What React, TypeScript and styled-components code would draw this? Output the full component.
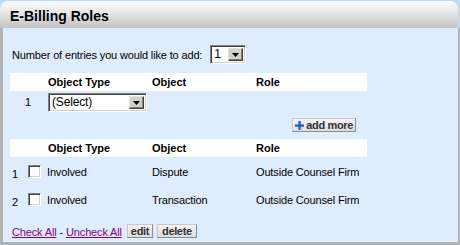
import React from "react";
import styled, { createGlobalStyle } from "styled-components";

const GlobalStyle = createGlobalStyle`
  html, body {
    margin: 0;
    padding: 0;
    background: #bcdcf6;
  }
  body {
    font-family: "Liberation Sans", Arial, sans-serif;
    font-size: 11px;
    letter-spacing: -0.15px;
    color: #000;
  }
`;

type Entry = { id: number; type: string; object: string; role: string };

const entries: Entry[] = [
  { id: 1, type: "Involved", object: "Dispute", role: "Outside Counsel Firm" },
  { id: 2, type: "Involved", object: "Transaction", role: "Outside Counsel Firm" },
];

function PlusIcon() {
  return (
    <svg width="9" height="9" viewBox="0 0 9 9">
      <rect x="3.4" y="0" width="2.3" height="9" fill="#1463cc" />
      <rect x="0" y="3.4" width="9" height="2.3" fill="#1463cc" />
    </svg>
  );
}

function FakeSelect(props: { value: string; width: number }) {
  return (
    <SelectBox style={{ width: props.width }}>
      <SelectValue>{props.value}</SelectValue>
      <SelectArrow>
        <svg width="7" height="4" viewBox="0 0 7 4">
          <polygon points="0,0 7,0 3.5,4" fill="#000" />
        </svg>
      </SelectArrow>
    </SelectBox>
  );
}

export default function App() {
  return (
    <Page>
      <GlobalStyle />
      <Panel>
        <Header>E-Billing Roles</Header>
        <Body>
          <EntriesRow>
            <span>Number of entries you would like to add:</span>
            <FakeSelect value="1" width={36} />
          </EntriesRow>

          <AddTable>
            <HeadRow $cols="38px 104px 104px 111px">
              <span />
              <HeadCell>Object Type</HeadCell>
              <HeadCell>Object</HeadCell>
              <HeadCell>Role</HeadCell>
            </HeadRow>
            <AddRow>
              <RowNum>1</RowNum>
              <FakeSelect value="(Select)" width={99} />
            </AddRow>
          </AddTable>

          <AddMoreBar>
            <SmallButton $pad={2} $gap={2}>
              <PlusIcon />
              add more
            </SmallButton>
          </AddMoreBar>

          <ListTable>
            <HeadRow $cols="16px 22px 104px 104px 111px">
              <span />
              <span />
              <HeadCell>Object Type</HeadCell>
              <HeadCell>Object</HeadCell>
              <HeadCell>Role</HeadCell>
            </HeadRow>
            {entries.map((e) => (
              <ListRow key={e.id}>
                <ListNum>{e.id}</ListNum>
                <CheckCell>
                  <Checkbox />
                </CheckCell>
                <Cell $shift={-1}>{e.type}</Cell>
                <Cell>{e.object}</Cell>
                <Cell>{e.role}</Cell>
              </ListRow>
            ))}
          </ListTable>

          <Footer>
            <LinkText>Check All</LinkText>
            <Dash>-</Dash>
            <LinkText>Uncheck All</LinkText>
            <FooterButtons>
              <SmallButton $pad={3}>edit</SmallButton>
              <SmallButton $pad={4}>delete</SmallButton>
            </FooterButtons>
          </Footer>
        </Body>
      </Panel>
    </Page>
  );
}

const Page = styled.div`
  width: 460px;
  height: 245px;
  padding-top: 1px;
  box-sizing: border-box;
  overflow: hidden;
`;

const Panel = styled.div`
  display: flex;
  flex-direction: column;
  height: 244px;
`;

const Header = styled.div`
  height: 27px;
  margin-right: 2px;
  padding: 2px 0 0 10px;
  box-sizing: border-box;
  display: flex;
  align-items: center;
  border-radius: 8px 8px 0 0;
  background: linear-gradient(#fbfbfb, #e6e6e6 45%, #c2c2c2);
  font-size: 14px;
  font-weight: bold;
  letter-spacing: 0;
  color: #000;
`;

const Body = styled.div`
  flex: 1;
  background: #deedfe;
  border-left: 3px solid #b2b2b2;
  border-right: 2px solid #b2b2b2;
  border-bottom: 3px solid #b2b2b2;
  padding: 17px 0 0 7px;
  display: flex;
  flex-direction: column;
`;

const EntriesRow = styled.div`
  display: flex;
  align-items: center;
  gap: 8px;
  padding-left: 2px;
  height: 19px;
`;

const SelectBox = styled.div`
  height: 19px;
  box-sizing: border-box;
  display: flex;
  background: #fff;
  border: 1px solid;
  border-color: #808080 #ffffff #ffffff #808080;
  box-shadow: inset 1px 1px 0 #404040, inset -1px -1px 0 #d4d0c8;
  padding: 2px;
`;

const SelectValue = styled.div`
  flex: 1;
  display: flex;
  align-items: center;
  padding-left: 1px;
  font-size: 12px;
  line-height: 13px;
`;

const SelectArrow = styled.div`
  width: 15px;
  box-sizing: border-box;
  background: #d4d0c8;
  display: flex;
  align-items: center;
  justify-content: center;
  border: 1px solid;
  border-color: #e4e2dc #404040 #404040 #e4e2dc;
  box-shadow: inset -1px -1px 0 #808080;
`;

const AddTable = styled.div`
  margin-top: 9px;
  width: 357px;
`;

const HeadRow = styled.div<{ $cols: string }>`
  display: grid;
  grid-template-columns: ${(p) => p.$cols};
  height: 18px;
  align-items: center;
  background: #fff;
`;

const HeadCell = styled.span`
  font-weight: bold;
  letter-spacing: 0;
`;

const AddRow = styled.div`
  display: grid;
  grid-template-columns: 38px 1fr;
  align-items: center;
  height: 22px;
  padding-top: 1px;
  box-sizing: border-box;
`;

const RowNum = styled.span`
  padding-left: 15px;
  margin-top: -2px;
`;

const AddMoreBar = styled.div`
  width: 346px;
  margin-top: 5px;
  display: flex;
  justify-content: flex-end;
`;

const SmallButton = styled.button<{ $pad?: number; $gap?: number }>`
  height: 14px;
  padding: 0 ${(p) => p.$pad ?? 2}px;
  display: inline-flex;
  align-items: center;
  gap: ${(p) => p.$gap ?? 0}px;
  font-family: "Liberation Sans", Arial, sans-serif;
  font-size: 11px;
  font-weight: bold;
  letter-spacing: -0.35px;
  color: #333;
  background: linear-gradient(#f4f4f4, #dcdcdc);
  border: 1px solid;
  border-color: #c8c8c8 #8c8c8c #8c8c8c #c8c8c8;
  border-radius: 0;
  line-height: 12px;
  cursor: pointer;
`;

const ListTable = styled.div`
  margin-top: 7px;
  width: 357px;
`;

const ListRow = styled.div`
  display: grid;
  grid-template-columns: 16px 22px 104px 104px 111px;
  align-items: center;
  height: 28px;
  padding-top: 1px;
  box-sizing: border-box;
`;

const ListNum = styled.span`
  padding-left: 2px;
  padding-top: 4px;
`;

const CheckCell = styled.span`
  display: flex;
  padding-left: 2px;
`;

const Checkbox = styled.span`
  width: 13px;
  height: 13px;
  box-sizing: border-box;
  background: #fff;
  border: 1px solid;
  border-color: #808080 #ffffff #ffffff #808080;
  box-shadow: inset 1px 1px 0 #404040, inset -1px -1px 0 #d4d0c8;
`;

const Cell = styled.span<{ $shift?: number }>`
  margin-left: ${(p) => p.$shift || 0}px;
`;

const Footer = styled.div`
  margin-top: 11px;
  padding-left: 2px;
  display: flex;
  align-items: center;
  height: 14px;
`;

const LinkText = styled.a`
  color: #800080;
  text-decoration: underline;
  cursor: pointer;
  margin-top: 2px;
`;

const Dash = styled.span`
  margin: 2px 3px 0;
`;

const FooterButtons = styled.div`
  display: flex;
  gap: 4px;
  margin-left: 5px;
`;
